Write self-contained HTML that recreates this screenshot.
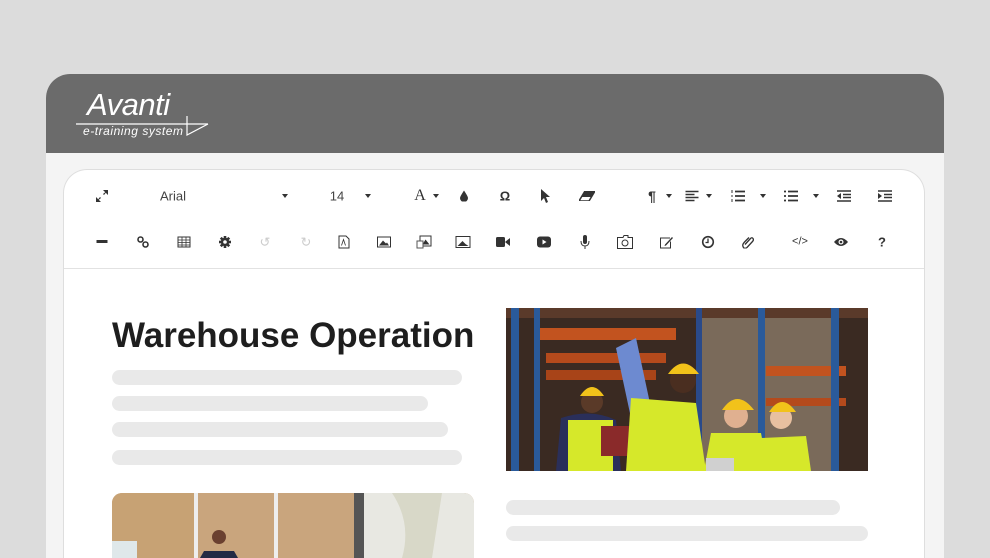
<!DOCTYPE html>
<html><head><meta charset="utf-8"><style>
*{margin:0;padding:0;box-sizing:border-box}
html,body{width:990px;height:558px;overflow:hidden}
body{background:#dcdcdc;position:relative;font-family:"Liberation Sans",Arial,sans-serif}
.card{position:absolute;left:46px;top:74px;width:898px;height:484px;background:#f4f4f4;border-radius:24px 24px 0 0;overflow:hidden}
.hdr{position:absolute;left:0;top:0;width:100%;height:79px;background:#6b6b6b}
.panel{position:absolute;left:63px;top:169px;width:862px;height:389px;background:#fff;border:1.5px solid #dedede;border-bottom:none;border-radius:24px 24px 0 0;overflow:hidden}
.tb{position:absolute;left:0;top:0;width:100%;height:99px;border-bottom:1.5px solid #e2e2e2}
.i{position:absolute;transform:translate(-50%,-50%);color:#333;font-size:13px;line-height:1}
.c{position:absolute;width:0;height:0;border-left:3.5px solid transparent;border-right:3.5px solid transparent;border-top:4px solid #333;transform:translate(-50%,-50%)}
.bar{position:absolute;height:15px;background:#e9e9e9;border-radius:8px}
h1{position:absolute;left:112px;top:316px;font-size:35px;font-weight:700;color:#1e1e1e;white-space:nowrap;line-height:40px}
.clip{position:absolute;left:0;top:0;width:990px;height:558px;overflow:hidden}
</style></head><body><div class="clip">
<div class="card"><div class="hdr">
<svg width="200" height="79" style="position:absolute;left:0;top:0">
<text x="41" y="41" fill="#fff" font-family="Liberation Sans" font-style="italic" font-size="31" letter-spacing="-0.5">Avanti</text>
<line x1="30" y1="50" x2="162" y2="50" stroke="#fff" stroke-width="1.3"/>
<polyline points="141,42 141,61 162,50" fill="none" stroke="#fff" stroke-width="1.2"/>
<text x="37" y="61" fill="#fff" font-family="Liberation Sans" font-style="italic" font-size="12" textLength="100">e-training system</text>
</svg></div></div>
<div class="panel">
<div class="tb"></div>
</div>
<svg class="i" style="left:102px;top:196px" width="12" height="12"><path d="M0 12L4 7L5 8ZM12 0L8 5L7 4Z" fill="#333"/><path d="M0 12V7L5 12ZM12 0V5L7 0Z" fill="#333"/></svg>
<div class="i" style="left:173px;top:196px;color:#444">Arial</div>
<div class="c" style="left:285px;top:196px"></div>
<div class="i" style="left:337px;top:196px;color:#444">14</div>
<div class="c" style="left:368px;top:196px"></div>
<div class="i" style="left:420px;top:196px;font-family:'Liberation Serif';font-size:16px">A</div>
<div class="c" style="left:436px;top:196px"></div>
<svg class="i" style="left:464px;top:196px" width="8" height="11"><path d="M4 0Q8 6 8 7.5A4 4 0 0 1 0 7.5Q0 6 4 0Z" fill="#333"/></svg>
<div class="i" style="left:505px;top:196px;font-weight:bold">Ω</div>
<svg class="i" style="left:545px;top:196px" width="10" height="14" viewBox="0 0 10 14"><path d="M1 0 L1 12 L4 9 L6 14 L8 13 L6 8 L10 8 Z" fill="#333"/></svg>
<svg class="i" style="left:587px;top:196px" width="16" height="10" viewBox="0 0 16 10"><path d="M6 0 H16 L10 10 H0 Z" fill="none" stroke="#333" stroke-width="1.5"/><path d="M6 0 H16 L12 6 H2Z" fill="#333"/></svg>
<div class="i" style="left:652px;top:196px;font-weight:bold;font-size:14px">¶</div>
<div class="c" style="left:669px;top:196px"></div>
<svg class="i" style="left:692px;top:196px" width="13" height="11"><path d="M0 1H13M0 4H9M0 7H13M0 10H9" stroke="#333" stroke-width="1.6"/></svg>
<div class="c" style="left:709px;top:196px"></div>
<svg class="i" style="left:738px;top:196px" width="14" height="12"><path d="M4 1.5H14M4 6H14M4 10.5H14" stroke="#333" stroke-width="1.8"/><path d="M1 0V3M1 5V7M1 9V12" stroke="#333" stroke-width="1"/></svg>
<div class="c" style="left:763px;top:196px"></div>
<svg class="i" style="left:791px;top:196px" width="14" height="12"><path d="M4 1.5H14M4 6H14M4 10.5H14M0 1.5H2M0 6H2M0 10.5H2" stroke="#333" stroke-width="1.8"/></svg>
<div class="c" style="left:816px;top:196px"></div>
<svg class="i" style="left:844px;top:196px" width="14" height="12"><path d="M0 1H14M6 4.5H14M6 7.5H14M0 11H14" stroke="#333" stroke-width="1.6"/><path d="M4 3V9L0 6Z" fill="#333"/></svg>
<svg class="i" style="left:885px;top:196px" width="14" height="12"><path d="M0 1H14M6 4.5H14M6 7.5H14M0 11H14" stroke="#333" stroke-width="1.6"/><path d="M0 3V9L4 6Z" fill="#333"/></svg>
<svg class="i" style="left:102px;top:242px" width="11" height="4"><rect width="11" height="3" fill="#333"/></svg>
<svg class="i" style="left:143px;top:242px" width="12" height="12"><circle cx="3.5" cy="3.5" r="2.5" fill="none" stroke="#333" stroke-width="1.6"/><circle cx="8.5" cy="8.5" r="2.5" fill="none" stroke="#333" stroke-width="1.6"/></svg>
<svg class="i" style="left:184px;top:242px" width="13" height="11"><rect x=".5" y=".5" width="12" height="10" fill="none" stroke="#333"/><path d="M0 3.5H13M0 6H13M0 8.5H13M4.5 0V11M8.5 0V11" stroke="#333" stroke-width=".8"/></svg>
<svg class="i" style="left:225px;top:242px" width="12" height="12" viewBox="-6 -6 12 12"><g fill="#333"><circle r="4.2"/><rect x="-1.3" y="-6" width="2.6" height="12"/><rect x="-1.3" y="-6" width="2.6" height="12" transform="rotate(45)"/><rect x="-1.3" y="-6" width="2.6" height="12" transform="rotate(90)"/><rect x="-1.3" y="-6" width="2.6" height="12" transform="rotate(135)"/></g><circle r="1.8" fill="#fff"/></svg>
<div class="i" style="left:265px;top:242px;color:#ccc">↺</div>
<div class="i" style="left:306px;top:242px;color:#ccc">↻</div>
<svg class="i" style="left:344px;top:242px" width="11" height="13"><path d="M.5 .5H7.5L10.5 3.5V12.5H.5Z" fill="none" stroke="#333"/><path d="M3 10L5 4L7 10" fill="none" stroke="#333" stroke-width=".8"/></svg>
<svg class="i" style="left:384px;top:242px" width="14" height="11"><rect x=".5" y=".5" width="13" height="10" fill="none" stroke="#333"/><path d="M2 9L6 4L9 7L10 6L12 9Z" fill="#333"/></svg>
<svg class="i" style="left:424px;top:242px" width="15" height="13"><rect x="3.5" y=".5" width="11" height="10" fill="none" stroke="#333"/><path d="M6 9L9 4L13 9Z" fill="#333"/><rect x=".5" y="5.5" width="6" height="7" fill="#fff" stroke="#555"/></svg>
<svg class="i" style="left:463px;top:242px" width="15" height="12"><rect x=".5" y=".5" width="14" height="11" fill="none" stroke="#333"/><path d="M2 10L7 5L10 8L13 10Z" fill="#333"/></svg>
<svg class="i" style="left:503px;top:242px" width="14" height="10"><rect width="9" height="10" rx="1.5" fill="#333"/><path d="M9 5L14 1V9Z" fill="#333"/></svg>
<svg class="i" style="left:544px;top:242px" width="14" height="11"><rect width="14" height="11" rx="3" fill="#333"/><path d="M5.5 3L9.5 5.5L5.5 8Z" fill="#fff"/></svg>
<svg class="i" style="left:585px;top:242px" width="10" height="14"><rect x="3" width="4" height="9" rx="2" fill="#333"/><path d="M1 6Q1 11 5 11Q9 11 9 6M5 11V14" fill="none" stroke="#333"/></svg>
<svg class="i" style="left:625px;top:242px" width="16" height="14"><path d="M.5 2.5H6L7 .5H11V2.5H15.5V13.5H.5Z" fill="none" stroke="#333"/><circle cx="8" cy="8" r="3" fill="none" stroke="#333"/></svg>
<svg class="i" style="left:667px;top:242px" width="14" height="13"><path d="M10 2.5H.5V12.5H10.5V6" fill="none" stroke="#333"/><path d="M5 9L12 1.5L13 2.5L6 10L4.5 10.5Z" fill="#333"/></svg>
<svg class="i" style="left:708px;top:242px" width="13" height="13"><circle cx="6.5" cy="6.5" r="5.3" fill="none" stroke="#333" stroke-width="1.6"/><path d="M6.5 3V7H4" fill="none" stroke="#333" stroke-width="1.3"/></svg>
<svg class="i" style="left:748px;top:242px" width="12" height="13"><path d="M3 9L8.5 3Q10 1.5 11 3Q12 4.5 10.5 6L5 12Q2 14 1 11Q0 9 3 6L7 2" fill="none" stroke="#333" stroke-width="1.3"/></svg>
<div class="i" style="left:800px;top:242px;font-size:11px">&lt;/&gt;</div>
<svg class="i" style="left:841px;top:242px" width="14" height="10"><path d="M0 5Q7 -3 14 5Q7 13 0 5Z" fill="#333"/><circle cx="7" cy="5" r="2.5" fill="#fff"/><circle cx="7" cy="5" r="1.3" fill="#333"/></svg>
<div class="i" style="left:882px;top:242px;font-weight:bold">?</div>

<h1>Warehouse Operation</h1>
<div class="bar" style="left:112px;top:370px;width:350px"></div>
<div class="bar" style="left:112px;top:396px;width:316px"></div>
<div class="bar" style="left:112px;top:422px;width:336px"></div>
<div class="bar" style="left:112px;top:450px;width:350px"></div>
<div class="bar" style="left:506px;top:500px;width:334px"></div>
<div class="bar" style="left:506px;top:526px;width:362px"></div>

<svg style="position:absolute;left:506px;top:308px" width="362" height="163" viewBox="0 0 362 163">
<rect width="362" height="163" fill="#3a2a22"/>
<rect x="30" y="20" width="140" height="12" fill="#c2531f"/><rect x="40" y="45" width="120" height="10" fill="#b44a1c"/><rect x="40" y="62" width="110" height="10" fill="#a84418"/>
<rect x="190" y="0" width="140" height="163" fill="#7a6a5a"/><rect x="260" y="58" width="80" height="10" fill="#c2531f"/><rect x="260" y="90" width="80" height="8" fill="#b44a1c"/>
<rect x="0" y="0" width="362" height="10" fill="#5a3a2a"/>
<rect x="5" y="0" width="8" height="163" fill="#2a5a9a"/><rect x="28" y="0" width="6" height="163" fill="#2a5a9a"/><rect x="190" y="0" width="6" height="163" fill="#2a4a8a"/><rect x="252" y="0" width="7" height="163" fill="#2a5a9a"/><rect x="325" y="0" width="8" height="163" fill="#2a5a9a"/>
<path d="M110 40 L130 30 L145 100 L125 110Z" fill="#6d8ad0"/>
<path d="M55 110 Q85 100 110 112 L115 163 L50 163Z" fill="#2a2f5a"/><rect x="62" y="112" width="45" height="51" fill="#d6e82a"/><circle cx="86" cy="94" r="11" fill="#5a3a28"/><path d="M74 88 Q86 70 98 88Z" fill="#f2c21a"/><rect x="95" y="118" width="30" height="30" fill="#8a2a2a"/>
<path d="M125 90 L190 95 L200 163 L120 163Z" fill="#d6e82a"/><circle cx="177" cy="72" r="13" fill="#4a2e20"/><path d="M162 66 Q177 45 193 66Z" fill="#f2c21a"/>
<path d="M205 125 L255 125 L262 163 L198 163Z" fill="#d6e82a"/><circle cx="230" cy="108" r="12" fill="#e0b090"/><path d="M216 102 Q231 80 248 102Z" fill="#f2c21a"/><rect x="200" y="150" width="28" height="13" fill="#d0d0d0"/>
<path d="M255 130 L300 128 L305 163 L252 163Z" fill="#d6e82a"/><circle cx="275" cy="110" r="11" fill="#e8c0a0"/><path d="M263 104 Q276 84 290 104Z" fill="#f2c21a"/>
</svg>

<svg style="position:absolute;left:112px;top:493px;border-radius:10px 10px 0 0" width="362" height="65" viewBox="0 0 362 65">
<rect width="362" height="65" fill="#c9a57d"/>
<rect x="0" y="0" width="82" height="65" fill="#c7a274"/><rect x="82" y="0" width="4" height="65" fill="#eee"/><rect x="162" y="0" width="4" height="65" fill="#eee"/><rect x="242" y="0" width="10" height="65" fill="#555"/>
<rect x="252" y="0" width="110" height="65" fill="#e8e8e2"/><path d="M280 0 Q300 30 290 65 L320 65 L330 0Z" fill="#d8d8c8"/>
<rect x="0" y="48" width="25" height="17" fill="#dfe8ea"/><circle cx="107" cy="44" r="7" fill="#6a4030"/><path d="M92 58 L122 58 L126 65 L88 65Z" fill="#222a44"/>
</svg>
</div></body></html>
